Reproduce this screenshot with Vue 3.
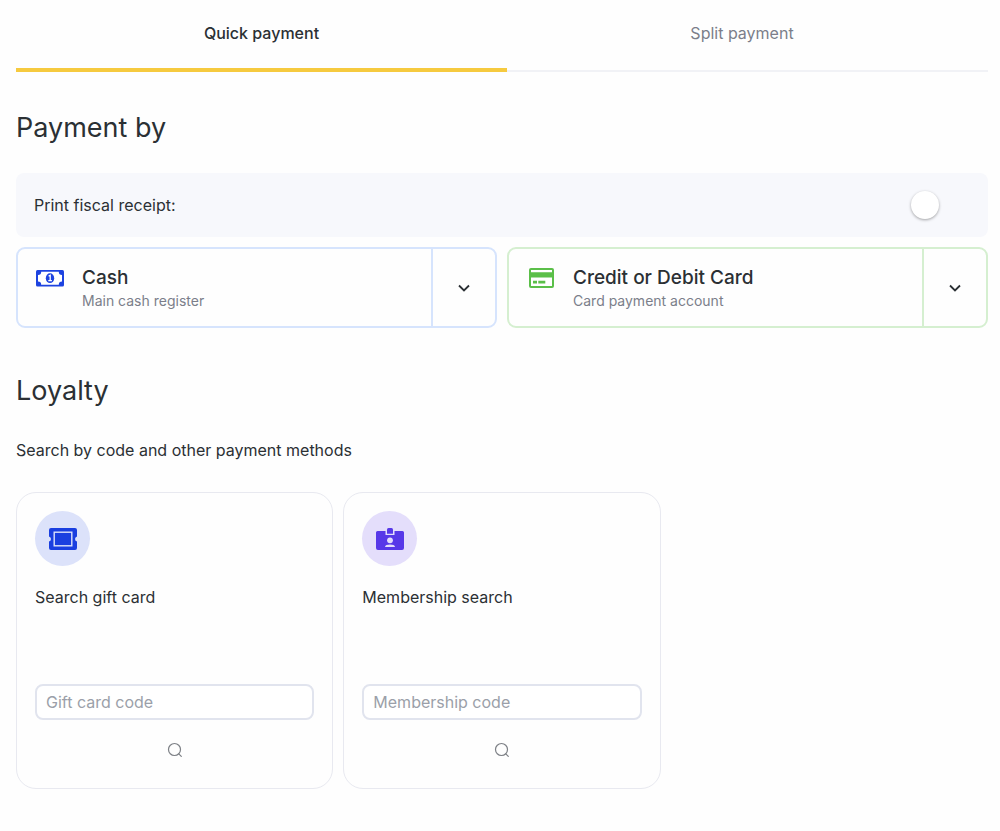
<script setup>
import { ref } from 'vue'

const tab = ref('quick')
const printReceipt = ref(false)
const codes = ref({ gift: '', member: '' })

const tabs = [
  { id: 'quick', label: 'Quick payment' },
  { id: 'split', label: 'Split payment' },
]
const methods = [
  { id: 'cash', title: 'Cash', account: 'Main cash register' },
  { id: 'card', title: 'Credit or Debit Card', account: 'Card payment account' },
]
const searches = [
  { id: 'gift', title: 'Search gift card', placeholder: 'Gift card code' },
  { id: 'member', title: 'Membership search', placeholder: 'Membership code' },
]
</script>

<template>
  <main class="page">
    <div class="tabs" role="tablist">
      <button
        v-for="t in tabs"
        :key="t.id"
        type="button"
        role="tab"
        class="tab"
        :class="{ active: tab === t.id }"
        :aria-selected="tab === t.id"
        @click="tab = t.id"
      >{{ t.label }}</button>
    </div>

    <section class="payment">
      <h1 class="heading">Payment by</h1>
      <label class="receipt">
        <span>Print fiscal receipt:</span>
        <input v-model="printReceipt" class="switch" type="checkbox" role="switch" />
      </label>
      <div class="methods">
        <div v-for="m in methods" :key="m.id" class="method" :class="m.id">
          <button type="button" class="method-main">
            <svg v-if="m.id === 'cash'" class="method-icon" viewBox="0 0 28 28" aria-hidden="true">
              <rect y="6" width="28" height="16.5" rx="1.5" fill="#1d43e0" />
              <path d="M5.2 7.800h17.600a3.200 3.200 0 0 0 3.200 3.200v6.500a3.200 3.200 0 0 0-3.200 3.200H5.200A3.200 3.200 0 0 0 2 17.500V11a3.200 3.200 0 0 0 3.200-3.200z" fill="#fff" />
              <ellipse cx="14" cy="14.2" rx="4.200" ry="4.900" fill="#1d43e0" />
              <path d="M12.600 12.200l1.600-.8v5M12.300 16.600h3.600" fill="none" stroke="#fff" stroke-width="1.300" />
            </svg>
            <svg v-else class="method-icon" viewBox="0 0 28 28" aria-hidden="true">
              <rect x="2" y="4" width="25" height="20" rx="2" fill="#5bbf49" />
              <path d="M4 6h21v2.200H4zM4 13.600h21V22H4z" fill="#fff" />
              <path d="M6 16.800h4v2.700H6zM11.300 16.800h7v2.700h-7z" fill="#5bbf49" />
            </svg>
            <span class="method-text">
              <span class="method-title">{{ m.title }}</span>
              <span class="method-account">{{ m.account }}</span>
            </span>
          </button>
          <button type="button" class="method-more" :aria-label="`Choose ${m.title} account`">
            <svg width="14" height="10" viewBox="0 0 14 10" aria-hidden="true">
              <path d="M2 2.5l5 5 5-5" fill="none" stroke="#2b3034" stroke-width="1.8" />
            </svg>
          </button>
        </div>
      </div>
    </section>

    <section class="loyalty">
      <h2 class="heading">Loyalty</h2>
      <p class="hint">Search by code and other payment methods</p>
      <div class="searches">
        <form v-for="s in searches" :key="s.id" class="search" :class="s.id" @submit.prevent>
          <span class="badge">
            <svg v-if="s.id === 'gift'" width="28" height="22" viewBox="0 0 28 22" aria-hidden="true">
              <path d="M2 0h24a2 2 0 0 1 2 2v6.400a2.700 2.700 0 0 0 0 5.200V20a2 2 0 0 1-2 2H2a2 2 0 0 1-2-2v-6.400a2.700 2.700 0 0 0 0-5.200V2a2 2 0 0 1 2-2z" fill="#1a3fe0" />
              <rect x="5.200" y="4.200" width="17.600" height="13.600" fill="none" stroke="#dce2fa" stroke-width="1.400" />
            </svg>
            <svg v-else width="28" height="22" viewBox="0 0 28 22" aria-hidden="true">
              <path d="M1.500 3H9.500v4h9V3h8a1.500 1.500 0 0 1 1.500 1.500V20a2 2 0 0 1-2 2H2a2 2 0 0 1-2-2V4.500A1.500 1.500 0 0 1 1.500 3z" fill="#5738e8" />
              <path d="M11 5.800V1.500A1.500 1.500 0 0 1 12.500 0h3A1.500 1.500 0 0 1 17 1.500v4.300z" fill="#5738e8" />
              <circle cx="14" cy="12.300" r="2.900" fill="#e4defb" />
              <path d="M9 19c.3-1.600 2-2.400 5-2.400s4.700.8 5 2.400z" fill="#e4defb" />
            </svg>
          </span>
          <label class="search-title" :for="`code-${s.id}`">{{ s.title }}</label>
          <input
            :id="`code-${s.id}`"
            v-model="codes[s.id]"
            class="code"
            type="text"
            :placeholder="s.placeholder"
          />
          <button type="submit" class="go" aria-label="Search">
            <svg width="16" height="16" viewBox="0 0 16 16" fill="none" stroke="#7d8086" stroke-width="1.200" stroke-linecap="round" aria-hidden="true">
              <circle cx="7.500" cy="7.500" r="6" />
              <path d="M11.800 11.800l2.500 2.500" />
            </svg>
          </button>
        </form>
      </div>
    </section>
  </main>
</template>

<style>
body {
  background: #fefefe;
}
</style>

<style scoped>
.page {
  padding: 0 12px 42px 16px;
  font-family: Inter, "Liberation Sans", sans-serif;
  font-size: 16px;
  line-height: 24px;
  color: #2b3034;
}
button,
input {
  font: inherit;
  color: inherit;
  margin: 0;
  box-sizing: border-box;
}
button {
  padding: 0;
  border: 0;
  background: none;
  cursor: pointer;
}
.tabs {
  display: grid;
  grid-template-columns: 491fr 470fr;
  padding-right: 11px;
  box-shadow: inset 0 -2px #f1f2f6;
}
.tab {
  height: 72px;
  padding-bottom: 2px;
  border-bottom: 4px solid transparent;
  color: #7b7e8a;
}
.tab.active {
  border-bottom-color: #f6ca3f;
  color: #2b3034;
  font-weight: 500;
}
.heading {
  margin: 0;
  font-size: 27px;
  line-height: 36px;
  font-weight: 400;
}
.payment {
  padding-top: 38px;
}
.receipt {
  display: flex;
  align-items: center;
  justify-content: space-between;
  height: 64px;
  box-sizing: border-box;
  margin: 27px 0 10px;
  padding: 0 49px 0 18px;
  border-radius: 8px;
  background: #f7f8fc;
}
.switch {
  appearance: none;
  width: 28px;
  height: 28px;
  border-radius: 50%;
  background: #fff;
  box-shadow: 0 1px 3px rgba(0, 0, 0, 0.35);
  cursor: pointer;
}
.switch:checked {
  background: #f6ca3f;
}
.methods {
  display: grid;
  grid-template-columns: 1fr 1fr;
  gap: 10px;
}
.method {
  --edge: #d6e4fd;
  display: flex;
  border: 2px solid var(--edge);
  border-radius: 9px;
}
.method.card {
  --edge: #d5efd0;
}
.method-main {
  flex: 1;
  display: flex;
  align-items: flex-start;
  gap: 18px;
  padding: 15px 18px;
  text-align: left;
}
.method-icon {
  width: 28px;
  height: 28px;
}
.method-text {
  display: flex;
  flex-direction: column;
}
.method-title {
  font-size: 19px;
  line-height: 27px;
  font-weight: 500;
}
.method-account {
  font-size: 14px;
  line-height: 20px;
  color: #7b7e8a;
}
.method-more {
  display: flex;
  align-items: center;
  justify-content: center;
  width: 64px;
  border-left: 2px solid var(--edge);
}
.loyalty {
  padding-top: 45px;
}
.hint {
  margin: 29px 0 30px;
}
.searches {
  display: grid;
  grid-template-columns: repeat(3, 1fr);
  gap: 10px;
}
.search {
  display: flex;
  flex-direction: column;
  padding: 18px 18px 26px;
  border: 1px solid #e8e9f0;
  border-radius: 20px;
}
.badge {
  display: flex;
  align-items: center;
  justify-content: center;
  width: 55px;
  height: 55px;
  border-radius: 50%;
  background: #dce2fa;
}
.member .badge {
  background: #e4defb;
}
.search-title {
  margin: 19px 0 75px;
}
.code {
  width: 100%;
  height: 36px;
  padding: 0 9px;
  border: 2px solid #e1e4ee;
  border-radius: 8px;
  background: #fff;
}
.code::placeholder {
  color: #9b9fa9;
  opacity: 1;
}
.go {
  display: flex;
  align-items: center;
  align-self: center;
  height: 24px;
  margin-top: 18px;
}
</style>
